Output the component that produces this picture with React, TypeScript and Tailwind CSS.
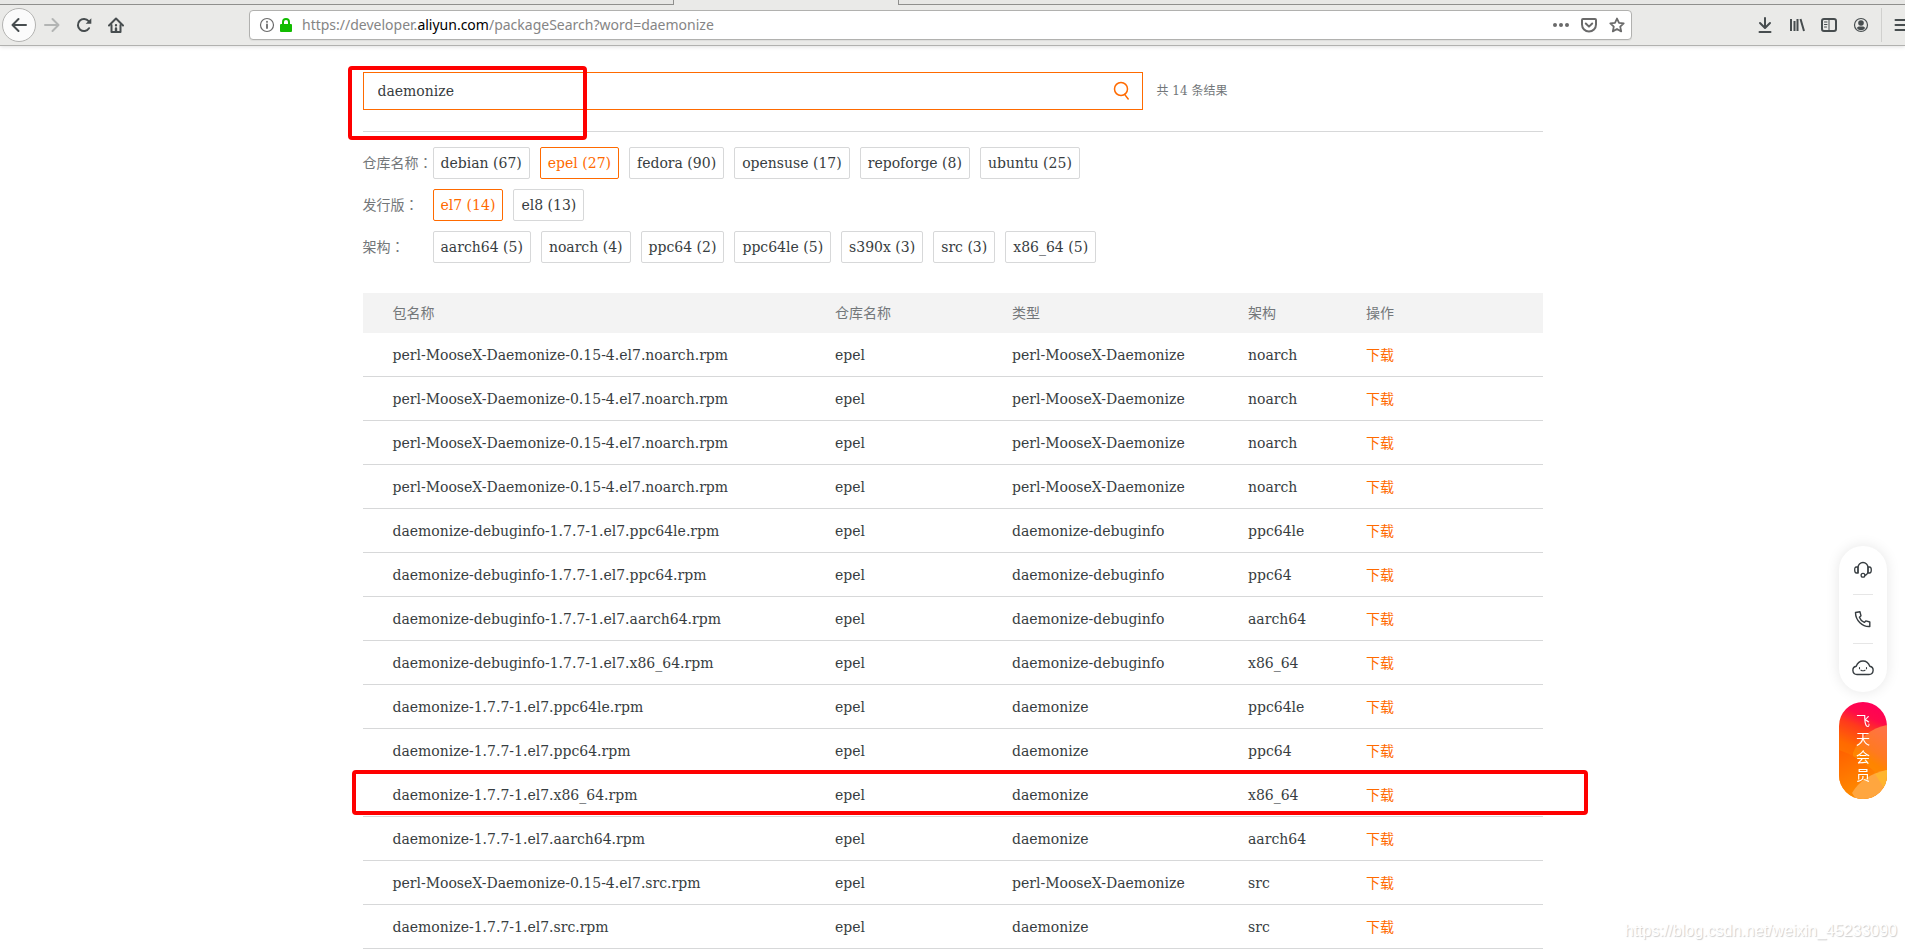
import React from 'react';
import clsx from 'clsx';

interface FilterGroup {
  label: string;
  options: { name: string; count: number; active?: boolean }[];
}

interface PackageRow {
  file: string;
  type: string;
  arch: string;
  marked?: boolean;
}

const filters: FilterGroup[] = [
  {
    label: '仓库名称',
    options: [
      { name: 'debian', count: 67 },
      { name: 'epel', count: 27, active: true },
      { name: 'fedora', count: 90 },
      { name: 'opensuse', count: 17 },
      { name: 'repoforge', count: 8 },
      { name: 'ubuntu', count: 25 },
    ],
  },
  {
    label: '发行版',
    options: [
      { name: 'el7', count: 14, active: true },
      { name: 'el8', count: 13 },
    ],
  },
  {
    label: '架构',
    options: [
      { name: 'aarch64', count: 5 },
      { name: 'noarch', count: 4 },
      { name: 'ppc64', count: 2 },
      { name: 'ppc64le', count: 5 },
      { name: 's390x', count: 3 },
      { name: 'src', count: 3 },
      { name: 'x86_64', count: 5 },
    ],
  },
];

const packages: PackageRow[] = [
  { file: 'perl-MooseX-Daemonize-0.15-4.el7.noarch.rpm', type: 'perl-MooseX-Daemonize', arch: 'noarch' },
  { file: 'perl-MooseX-Daemonize-0.15-4.el7.noarch.rpm', type: 'perl-MooseX-Daemonize', arch: 'noarch' },
  { file: 'perl-MooseX-Daemonize-0.15-4.el7.noarch.rpm', type: 'perl-MooseX-Daemonize', arch: 'noarch' },
  { file: 'perl-MooseX-Daemonize-0.15-4.el7.noarch.rpm', type: 'perl-MooseX-Daemonize', arch: 'noarch' },
  { file: 'daemonize-debuginfo-1.7.7-1.el7.ppc64le.rpm', type: 'daemonize-debuginfo', arch: 'ppc64le' },
  { file: 'daemonize-debuginfo-1.7.7-1.el7.ppc64.rpm', type: 'daemonize-debuginfo', arch: 'ppc64' },
  { file: 'daemonize-debuginfo-1.7.7-1.el7.aarch64.rpm', type: 'daemonize-debuginfo', arch: 'aarch64' },
  { file: 'daemonize-debuginfo-1.7.7-1.el7.x86_64.rpm', type: 'daemonize-debuginfo', arch: 'x86_64' },
  { file: 'daemonize-1.7.7-1.el7.ppc64le.rpm', type: 'daemonize', arch: 'ppc64le' },
  { file: 'daemonize-1.7.7-1.el7.ppc64.rpm', type: 'daemonize', arch: 'ppc64' },
  { file: 'daemonize-1.7.7-1.el7.x86_64.rpm', type: 'daemonize', arch: 'x86_64', marked: true },
  { file: 'daemonize-1.7.7-1.el7.aarch64.rpm', type: 'daemonize', arch: 'aarch64' },
  { file: 'perl-MooseX-Daemonize-0.15-4.el7.src.rpm', type: 'perl-MooseX-Daemonize', arch: 'src' },
  { file: 'daemonize-1.7.7-1.el7.src.rpm', type: 'daemonize', arch: 'src' },
];

function Icon({ children, className }: { children: React.ReactNode; className?: string }) {
  return (
    <svg
      viewBox="0 0 16 16"
      fill="none"
      stroke="currentColor"
      strokeWidth="2"
      strokeLinecap="round"
      strokeLinejoin="round"
      className={clsx('h-4 w-4 shrink-0', className)}
      aria-hidden="true"
    >
      {children}
    </svg>
  );
}

function BrowserBar() {
  return (
    <header className="relative z-10 border-b border-[#b1b1af] bg-[#eaeae8] text-[#474d4f] shadow-[0_1px_4px_rgba(0,0,0,0.12)]">
      {/* bottom edge of the tab strip */}
      <div className="flex h-[5px]">
        <div className="w-[674px] border-r border-b border-[#8f8f8d] bg-[#e7e7e5]" />
        <div className="w-56" />
        <div className="flex-1 border-b border-l border-[#8f8f8d] bg-[#e7e7e5]" />
      </div>
      <div className="flex h-10 items-center pl-0.5">
        <button aria-label="Back" className="flex h-[34px] w-[34px] items-center justify-center rounded-full border border-[#b3b3b1] bg-[#fbfbfb]">
          <Icon><path d="M15 8H2M7.500 2 1.500 8l6 6" /></Icon>
        </button>
        <button aria-label="Forward" className="ml-2 text-[#b3b5b4]">
          <Icon><path d="M1 8h13M8.500 2l6 6-6 6" /></Icon>
        </button>
        <button aria-label="Reload" className="ml-4">
          <Icon>
            <path d="M13 11.200A6 6 0 1 1 12.600 4.200" />
            <path d="M15.300 1.200v5.600H9.700z" fill="currentColor" stroke="none" />
          </Icon>
        </button>
        <button aria-label="Home" className="ml-4">
          <Icon>
            <path d="M1 8.500 8 1.500l7 7" />
            <path d="M3.500 8v7h9V8" />
            <path d="M8 14.500v-3M8 8.200v.1" strokeWidth="2.400" />
          </Icon>
        </button>
        <div className="mx-[125px] flex h-[30px] flex-1 items-center rounded border border-[#b1b1af] bg-white pr-1.5 pl-[9px] text-[#6a6a6a] shadow-[0_1px_1px_rgba(0,0,0,0.06)]">
          <Icon>
            <circle cx="8" cy="8" r="6.500" strokeWidth="1.200" />
            <path d="M8 7.500v3.500M8 4.700v.2" strokeWidth="1.800" />
          </Icon>
          <svg viewBox="0 0 12 14" className="ml-[5px] h-3.5 w-3 shrink-0" aria-hidden="true">
            <rect y="6" width="12" height="8" rx="1" fill="#12bc00" />
            <path d="M3 7V4a3 3 0 0 1 6 0v3" fill="none" stroke="#12bc00" strokeWidth="2" />
          </svg>
          <div role="textbox" aria-label="Address" className="ml-2.5 flex-1 font-['Noto_Sans',sans-serif] text-sm whitespace-nowrap text-[#858585]">
            https://developer.<span className="text-black">aliyun.com</span>/packageSearch?word=daemonize
          </div>
          <div className="flex gap-3">
            <button aria-label="Page actions">
              <Icon>
                <g fill="currentColor" stroke="none">
                  <circle cx="2" cy="8" r="2" />
                  <circle cx="8" cy="8" r="2" />
                  <circle cx="14" cy="8" r="2" />
                </g>
              </Icon>
            </button>
            <button aria-label="Save to Pocket">
              <Icon>
                <path d="M2 2h12a1 1 0 0 1 1 1v4.500a7 7 0 0 1-14 0V3a1 1 0 0 1 1-1z" />
                <path d="M4.800 6.500 8 9.600l3.200-3.100" />
              </Icon>
            </button>
            <button aria-label="Bookmark">
              <Icon>
                <path d="m8 1.500 2 4.400 4.700.5-3.500 3.200 1 4.800L8 12l-4.200 2.400 1-4.800L1.300 6.400 6 5.900z" strokeWidth="1.800" />
              </Icon>
            </button>
          </div>
        </div>
        <div className="-mr-[5px] flex h-full items-center gap-4">
          <button aria-label="Downloads">
            <Icon><path d="M8 1v9M3 6l5 5 5-5M2.500 15h11" /></Icon>
          </button>
          <button aria-label="Library">
            <Icon><path d="M2 2v12M5.500 4v10M8.500 2v12M11.500 2l3.500 12" strokeLinecap="butt" /></Icon>
          </button>
          <button aria-label="Sidebar">
            <Icon>
              <rect x="1" y="2" width="14" height="12" rx="2" />
              <path d="M8 2v12M3.500 5h2.500M3.500 7.500h2.500M3.500 10h2" strokeWidth="1" />
            </Icon>
          </button>
          <button aria-label="Account">
            <Icon>
              <circle cx="8" cy="8" r="6.500" strokeWidth="1.200" />
              <circle cx="8" cy="6" r="2.800" fill="currentColor" stroke="none" />
              <path d="M3.800 11c1.500-2 2.600-1.500 4.200-1.500s2.700-.5 4.200 1.500a5 5 0 0 1-8.400 0z" fill="currentColor" stroke="none" />
            </Icon>
          </button>
          <div className="-ml-1 flex h-[34px] items-center border-l border-[#d0d0ce] pl-3">
            <button aria-label="Menu">
              <Icon><path d="M1.500 3h13M1.500 8h13M1.500 13h13" /></Icon>
            </button>
          </div>
        </div>
      </div>
    </header>
  );
}

function SearchForm() {
  return (
    <form className="relative flex items-center border-b border-[#d7d8d9] pb-[21px]" onSubmit={(e) => e.preventDefault()}>
      <div className="flex h-[38px] w-[780px] items-center border border-[#ff6a00] bg-white">
        <input
          type="text"
          aria-label="搜索"
          defaultValue="daemonize"
          className="h-full flex-1 bg-transparent px-3.5 text-sm text-[#373d41] outline-none"
        />
        <button type="submit" aria-label="搜索" className="mr-[11px] text-[#ff6a00]">
          <svg viewBox="0 0 18 20" fill="none" stroke="currentColor" strokeWidth="1.500" strokeLinecap="round" className="h-5 w-[18px]">
            <circle cx="8" cy="8" r="6.500" />
            <path d="m11.600 13.400 3.600 4.600" />
          </svg>
        </button>
      </div>
      <span className="ml-3.5 text-xs text-[#73777a]">共 14 条结果</span>
      {/* hand-marked frame around the query */}
      <div className="pointer-events-none absolute -top-1.5 -left-[15px] h-[74px] w-[239px] rounded-sm border-4 border-[#fe0000]" />
    </form>
  );
}

function Filters() {
  return (
    <div className="mt-[15px] flex flex-col gap-2.5 text-sm">
      {filters.map((group) => (
        <div key={group.label} className="flex items-center">
          <span className="w-[70px] shrink-0 whitespace-nowrap text-[#73777a]">
            {group.label}
            <span className="font-['Noto_Sans_CJK_TC',sans-serif] leading-none">：</span>
          </span>
          <div className="flex gap-2.5">
            {group.options.map((option) => (
              <button
                key={option.name}
                className={clsx(
                  'h-8 rounded-xs border px-[7px] whitespace-nowrap',
                  option.active ? 'border-[#ff6a00] text-[#ff6a00]' : 'border-[#d7d8d9] text-[#373d41]'
                )}
              >
                {option.name} ({option.count})
              </button>
            ))}
          </div>
        </div>
      ))}
    </div>
  );
}

function PackageTable() {
  return (
    <table className="mt-[30px] w-full table-fixed border-separate border-spacing-0 text-left text-sm text-[#373d41]">
      <thead>
        <tr className="h-10 bg-[#f3f3f3] text-[#73777a]">
          <th className="w-[37.5%] pl-[30px] font-normal">包名称</th>
          <th className="w-[15%] pl-[30px] font-normal">仓库名称</th>
          <th className="w-[20%] pl-[30px] font-normal">类型</th>
          <th className="w-[10%] pl-[30px] font-normal">架构</th>
          <th className="pl-[30px] font-normal">操作</th>
        </tr>
      </thead>
      <tbody>
        {packages.map((row, index) => (
          <tr key={index} className="relative h-11 *:border-b *:border-[#d7d8d9] *:pl-[30px]">
            <td className="whitespace-nowrap">
              {row.file}
              {row.marked && (
                <div className="pointer-events-none absolute -top-[3px] -right-[45px] -left-[11px] h-[45px] rounded-sm border-4 border-[#fe0000]" />
              )}
            </td>
            <td>epel</td>
            <td className="whitespace-nowrap">{row.type}</td>
            <td>{row.arch}</td>
            <td>
              <a href="#download" className="text-[#ff6a00]">下载</a>
            </td>
          </tr>
        ))}
      </tbody>
    </table>
  );
}

function SideTools() {
  return (
    <aside className="fixed top-[546px] right-[18px] flex w-12 flex-col gap-2.5">
      <div className="flex h-[146px] flex-col items-center rounded-full bg-white text-[#373d41] shadow-[0_0_14px_rgba(0,0,0,0.1)]">
        <button aria-label="客服" className="flex w-6 flex-1 items-center justify-center">
          <svg viewBox="0 0 18 18" fill="none" stroke="currentColor" strokeWidth="1.300" className="h-[18px] w-[18px]">
            <path d="M4 12V6.500a5 5 0 0 1 10 0V10c0 2-1.500 4-3.500 4.500" />
            <path d="M4 6H2.500C1 6 .7 7 .7 9s.3 3 1.800 3H4zM14 6h1.500c1.500 0 1.800 1 1.800 3s-.3 3-1.800 3H14z" />
            <circle cx="9" cy="14.300" r="1.900" />
          </svg>
        </button>
        <div className="h-px w-5 bg-[#e6e6e6]" />
        <button aria-label="电话" className="flex w-6 flex-1 items-center justify-center">
          <svg viewBox="0 0 18 18" fill="none" stroke="currentColor" strokeWidth="1.400" strokeLinejoin="round" className="h-[18px] w-[18px]">
            <path d="M1.500 2.500 6 1.800l1 4-1.600 1.400c.8 2.300 2.500 4.200 4.900 5.200l1.500-1.500 4 1.100v4.500C8.500 17 1.500 10.500 1.500 2.500z" />
          </svg>
        </button>
        <div className="h-px w-5 bg-[#e6e6e6]" />
        <button aria-label="助手" className="flex w-6 flex-1 items-center justify-center">
          <svg viewBox="0 0 22 16" fill="none" stroke="currentColor" strokeWidth="1.400" strokeLinecap="round" className="h-4 w-[22px] shrink-0">
            <path d="M5 14.500h12a4.200 4.200 0 0 0 .8-8.300C16.600 3 14 1 11 1S5.400 3 4.200 6.200A4.200 4.200 0 0 0 5 14.500z" />
            <path d="M7.500 7.500v1.200M14.500 7.500v1.200M9 10.200q2 1.200 4 0" strokeWidth="1.100" />
          </svg>
        </button>
      </div>
      <a
        href="#member"
        className="relative flex h-[97px] flex-col items-center justify-center overflow-hidden rounded-full pb-2 font-['Noto_Sans_CJK_SC',sans-serif] text-sm leading-[18px] text-white"
      >
        <svg viewBox="0 0 48 97" preserveAspectRatio="none" className="absolute inset-0 h-full w-full" aria-hidden="true">
          <defs>
            <linearGradient id="member-top" x1="0.600" y1="0" x2="0.400" y2="1">
              <stop offset="0" stopColor="#ff0058" />
              <stop offset="0.150" stopColor="#ff0a4a" />
              <stop offset="0.280" stopColor="#ff3a1c" />
              <stop offset="0.500" stopColor="#ff6a00" />
              <stop offset="1" stopColor="#ff8a00" />
            </linearGradient>
            <linearGradient id="member-left" x1="0" y1="0" x2="0.300" y2="1">
              <stop offset="0" stopColor="#ff6000" />
              <stop offset="1" stopColor="#ff8c00" />
            </linearGradient>
            <linearGradient id="member-right" x1="0.700" y1="0" x2="0.400" y2="1">
              <stop offset="0" stopColor="#ff7345" />
              <stop offset="0.350" stopColor="#ff7a20" />
              <stop offset="0.500" stopColor="#ff8400" />
              <stop offset="1" stopColor="#ff9000" />
            </linearGradient>
          </defs>
          <rect width="48" height="97" fill="url(#member-top)" />
          <path d="M48 23C32 26 20 36 14 51v46h34z" fill="url(#member-right)" />
          <path d="M0 48c12 4 24 11 36 22L14 97H0z" fill="url(#member-left)" />
          <path d="M48 68C32 71 20 79 13 91l4 6h31z" fill="#ffa63f" />
          <path d="M48 68 36 72l9 14 3-2z" fill="#ffb52e" />
        </svg>
        <span className="relative">飞</span>
        <span className="relative">天</span>
        <span className="relative">会</span>
        <span className="relative">员</span>
      </a>
    </aside>
  );
}

export default function App() {
  return (
    <div className="relative min-h-screen overflow-hidden bg-white font-['DejaVu_Serif','Noto_Sans_CJK_SC',serif]">
      <BrowserBar />
      <main className="mx-auto max-w-[1180px] pt-[26px]">
        <SearchForm />
        <Filters />
        <PackageTable />
      </main>
      <SideTools />
      <div className="pointer-events-none absolute right-2 bottom-1.5 font-['Liberation_Sans',sans-serif] text-base text-white [text-shadow:1px_1px_1px_#cccccc]">
        https://blog.csdn.net/weixin_45233090
      </div>
    </div>
  );
}
